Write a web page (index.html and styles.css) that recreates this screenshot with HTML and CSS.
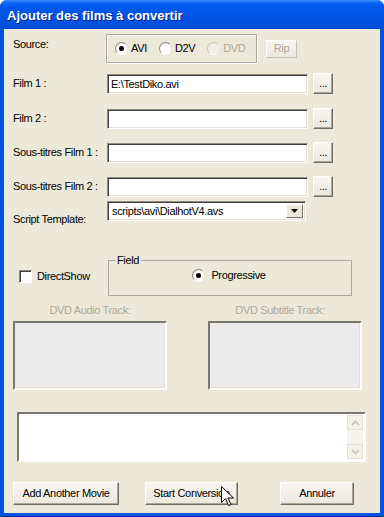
FILE: index.html
```html
<!DOCTYPE html>
<html lang="fr">
<head>
  <meta charset="UTF-8" />
  <title>Ajouter des films à convertir</title>
  <link rel="stylesheet" href="styles.css">
</head>
<body>

  <div class="window">
    <div class="titlebar">Ajouter des films à convertir</div>

    <div class="client">
      <div class="row source-row">
        <span class="label label-source">Source:</span>
        <div class="source-group">
          <span class="option"><span class="radio checked"></span>AVI</span>
          <span class="option"><span class="radio"></span>D2V</span>
          <span class="option disabled"><span class="radio"></span>DVD</span>
        </div>
        <span class="btn btn-rip disabled">Rip</span>
      </div>

      <div class="row file-row first">
        <span class="label">Film 1 :</span>
        <span class="textbox">E:\TestDiko.avi</span>
        <span class="btn btn-browse">...</span>
      </div>
      <div class="row file-row film2">
        <span class="label">Film 2 :</span>
        <span class="textbox"></span>
        <span class="btn btn-browse">...</span>
      </div>
      <div class="row file-row">
        <span class="label">Sous-titres Film 1 :</span>
        <span class="textbox"></span>
        <span class="btn btn-browse">...</span>
      </div>
      <div class="row file-row">
        <span class="label">Sous-titres Film 2 :</span>
        <span class="textbox"></span>
        <span class="btn btn-browse">...</span>
      </div>

      <div class="row script-row">
        <span class="label label-script">Script Template:</span>
        <span class="combo">
          <span class="combo-text">scripts\avi\DialhotV4.avs</span>
          <span class="combo-btn">
            <svg width="7" height="4" viewBox="0 0 7 4"><path d="M0 0h7L3.5 4z" fill="#000"/></svg>
          </span>
        </span>
      </div>

      <div class="row options-row">
        <span class="check-item"><span class="checkbox"></span>DirectShow</span>
        <fieldset class="field-group">
          <legend>Field</legend>
          <span class="option"><span class="radio checked"></span>Progressive</span>
        </fieldset>
      </div>

      <div class="tracks">
        <div class="track">
          <span class="track-label">DVD Audio Track:</span>
          <div class="listbox"></div>
        </div>
        <div class="track track-right">
          <span class="track-label">DVD Subtitle Track:</span>
          <div class="listbox"></div>
        </div>
      </div>

      <div class="log">
        <div class="log-text"></div>
        <div class="scrollbar">
          <span class="sb-arrow">
            <svg width="9" height="6" viewBox="0 0 9 6"><path d="M1 5l3.5-3.5L8 5" fill="none" stroke="#c3c3c0" stroke-width="1.6"/></svg>
          </span>
          <span class="sb-track"></span>
          <span class="sb-arrow">
            <svg width="9" height="6" viewBox="0 0 9 6"><path d="M1 1l3.5 3.5L8 1" fill="none" stroke="#c3c3c0" stroke-width="1.6"/></svg>
          </span>
        </div>
      </div>

      <div class="actions">
        <span class="btn btn-add">Add Another Movie</span>
        <span class="btn btn-start">Start Conversion</span>
        <span class="btn btn-cancel">Annuler</span>
      </div>
    </div>

    <!-- pointeur de la souris au-dessus du bouton -->
    <svg class="cursor" width="13" height="21" viewBox="0 0 13 21">
      <path d="M0.5 0.5v16l4-4 3 7 2.5-1-3-6.5h5.5z" fill="#fff" stroke="#000" stroke-width="1"/>
    </svg>
  </div>

</body>
</html>
```

FILE: styles.css
```css
* {
  box-sizing: border-box;
}
body {
  margin: 0;
  background: #fff;
  font-family: "Liberation Sans", Arial, sans-serif;
  font-size: 11px;
  letter-spacing: -0.35px;
  color: #000;
}
.window {
  position: relative;
  width: 384px;
  height: 517px;
  display: flex;
  flex-direction: column;
  background: #0453e2;
  border-radius: 7px 7px 0 0;
  padding: 0 4px 4px 4px;
  box-shadow: inset 0 -1px #002fa8;
}
.titlebar {
  height: 29px;
  margin: 0 -4px;
  padding: 3px 0 0 7px;
  line-height: 26px;
  border-radius: 7px 7px 0 0;
  background: linear-gradient(#3b8eff 0, #0a64f2 3px, #0058ee 7px, #0055e6 55%, #0050dc 90%, #0048cf 100%);
  color: #fff;
  font-weight: bold;
  font-size: 13px;
  letter-spacing: 0;
  text-shadow: 1px 1px #0a1e80;
}
.client {
  flex: 1;
  background: #ece9d8;
  padding: 5px 0 0 9px;
}
.row {
  display: flex;
  align-items: center;
}
.label {
  width: 94px;
  flex: none;
  line-height: 13px;
}

/* source */
.source-row {
  height: 29px;
}
.label-source {
  align-self: flex-start;
  margin-top: 4px;
}
.source-group {
  width: 151px;
  height: 29px;
  margin-left: -1px;
  display: flex;
  align-items: center;
  gap: 12px;
  padding-left: 8px;
  border: 1px solid #aca899;
  box-shadow: inset 1px 1px #fff, 1px 1px #fff;
}
.option {
  display: flex;
  align-items: center;
  gap: 3px;
  line-height: 13px;
}
.option.disabled {
  color: #aca899;
}
.radio {
  width: 13px;
  height: 13px;
  border-radius: 50%;
  background: radial-gradient(circle at 60% 60%, #fff 55%, #e4e2d6 100%);
  border: 1px solid;
  border-color: #8a877a #e6e4da #fff #8a877a;
  position: relative;
}
.radio.checked::after {
  content: "";
  position: absolute;
  left: 3px;
  top: 3px;
  width: 5px;
  height: 5px;
  border-radius: 50%;
  background: #000;
}
.option.disabled .radio {
  border-color: #c8c5b6 #eeece2 #fff #c8c5b6;
  background: #f2f0e6;
}

/* boutons */
.btn {
  display: flex;
  align-items: center;
  justify-content: center;
  flex: none;
  background: linear-gradient(#f7f6f1, #ebe8dc);
  border: 1px solid;
  border-color: #fff #6f6d66 #6f6d66 #fff;
  box-shadow: inset -1px -1px #a9a698;
  line-height: 13px;
}
.btn.disabled {
  color: #aca899;
  border-color: #fff #c1bfb3 #c1bfb3 #fff;
  box-shadow: none;
}
.btn-rip {
  width: 31px;
  height: 18px;
  margin-left: 9px;
}
.btn-browse {
  width: 20px;
  height: 21px;
  margin-left: 5px;
  padding-bottom: 3px;
  align-items: flex-end;
}

/* champs texte */
.file-row.first {
  margin-top: 10px;
}
.file-row {
  margin-top: 13px;
}
.file-row.film2 {
  margin-top: 14px;
}
.textbox {
  width: 201px;
  height: 20px;
  background: #fff;
  border: 1px solid;
  border-color: #8d8a7e #fff #fff #8d8a7e;
  box-shadow: inset 1px 1px #404040, inset -1px -1px #e2dfd2;
  padding: 3px 0 0 3px;
  line-height: 13px;
  white-space: nowrap;
}
.script-row {
  margin-top: 4px;
  align-items: flex-start;
}
.label-script {
  margin-top: 12px;
}
.combo {
  width: 199px;
  height: 20px;
  display: flex;
  background: #fff;
  border: 1px solid;
  border-color: #8d8a7e #fff #fff #8d8a7e;
  box-shadow: inset 1px 1px #404040, inset -1px -1px #e2dfd2;
  padding: 2px;
}
.combo-text {
  flex: 1;
  padding: 1px 0 0 2px;
  line-height: 13px;
}
.combo-btn {
  width: 17px;
  display: flex;
  align-items: center;
  justify-content: center;
  background: #ece9d8;
  border: 1px solid;
  border-color: #fff #6f6d66 #6f6d66 #fff;
}

/* options */
.options-row {
  margin-top: 28px;
  align-items: flex-end;
}
.check-item {
  width: 95px;
  display: flex;
  align-items: center;
  gap: 5px;
  padding-left: 6px;
  margin-bottom: 13px;
  line-height: 13px;
}
.checkbox {
  width: 13px;
  height: 13px;
  background: #fff;
  border: 1px solid;
  border-color: #8a877a #fff #fff #8a877a;
  box-shadow: inset 1px 1px #404040;
}
.field-group {
  width: 244px;
  height: 42px;
  margin: 0;
  padding: 2px 0 0 0;
  border: 1px solid #aca899;
  display: flex;
  justify-content: center;
  align-items: flex-start;
}
.field-group legend {
  margin-left: 6px;
  padding: 0 2px;
  line-height: 13px;
}
.field-group .option {
  gap: 6px;
  margin-left: -2px;
}

/* pistes dvd */
.tracks {
  display: flex;
  gap: 41px;
  margin-top: 8px;
}
.track {
  width: 154px;
  display: flex;
  flex-direction: column;
  align-items: center;
}
.track-right .track-label {
  margin-right: 10px;
}
.track-label {
  color: #aca899;
  line-height: 13px;
  height: 17px;
}
.listbox {
  width: 154px;
  height: 69px;
  background: #ebebeb;
  border: 2px solid;
  border-color: #7a776c #fff #fff #7a776c;
  box-shadow: inset -1px -1px #e0ded2;
}

/* journal */
.log {
  width: 349px;
  height: 50px;
  margin: 22px 0 0 4px;
  display: flex;
  background: #fff;
  border: 2px solid;
  border-color: #7a776c #fff #fff #7a776c;
  padding: 1px 1px 1px 0;
}
.log-text {
  flex: 1;
}
.scrollbar {
  width: 16px;
  display: flex;
  flex-direction: column;
  background: #f4f3ee;
}
.sb-arrow {
  height: 15px;
  display: flex;
  align-items: center;
  justify-content: center;
  background: #f2f1ea;
  border: 1px solid #e3e1d6;
}
.sb-track {
  flex: 1;
}

/* boutons du bas */
.actions {
  display: flex;
  margin-top: 20px;
}
.actions .btn {
  height: 23px;
}
.btn-add {
  width: 106px;
}
.btn-start {
  width: 93px;
  margin-left: 26px;
}
.btn-cancel {
  width: 74px;
  margin-left: 42px;
}
.cursor {
  position: absolute;
  left: 221px;
  top: 486px;
}
```
